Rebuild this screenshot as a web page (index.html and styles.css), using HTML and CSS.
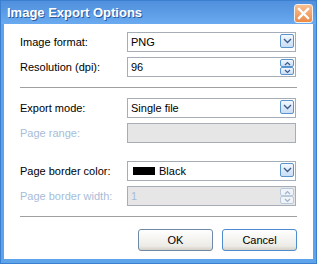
FILE: index.html
```html
<html>
  <head>
    <link rel="stylesheet" href="styles.css">
  </head>
  <body>
    <div class="window">
      <div class="titlebar">
        <span class="title">Image Export Options</span>
        <div class="close">
          <svg width="13" height="13" viewBox="0 0 13 13">
            <path d="M2 2 L11 11 M11 2 L2 11" stroke="#fff" stroke-width="2.4" stroke-linecap="square" fill="none"/>
          </svg>
        </div>
      </div>
      <div class="client">
        <div class="row first">
          <label>Image format:</label>
          <div class="field">
            <span>PNG</span>
            <div class="drop">
              <svg width="9" height="6" viewBox="0 0 9 6"><path d="M1 1 L4.5 4.5 L8 1" stroke="#3d5c8c" stroke-width="1.4" fill="none"/></svg>
            </div>
          </div>
        </div>
        <div class="row">
          <label>Resolution (dpi):</label>
          <div class="field">
            <span>96</span>
            <div class="spin">
              <div class="half"><svg width="7" height="5" viewBox="0 0 7 5"><path d="M1 4 L3.5 1.5 L6 4" stroke="#3d5c8c" stroke-width="1.2" fill="none"/></svg></div>
              <div class="half"><svg width="7" height="5" viewBox="0 0 7 5"><path d="M1 1 L3.5 3.5 L6 1" stroke="#3d5c8c" stroke-width="1.2" fill="none"/></svg></div>
            </div>
          </div>
        </div>
        <div class="sep"></div>
        <div class="row">
          <label>Export mode:</label>
          <div class="field">
            <span>Single file</span>
            <div class="drop">
              <svg width="9" height="6" viewBox="0 0 9 6"><path d="M1 1 L4.5 4.5 L8 1" stroke="#3d5c8c" stroke-width="1.4" fill="none"/></svg>
            </div>
          </div>
        </div>
        <div class="row">
          <label class="off">Page range:</label>
          <div class="field disabled"></div>
        </div>
        <div class="row gap">
          <label>Page border color:</label>
          <div class="field">
            <span class="swatch"></span>
            <span>Black</span>
            <div class="drop">
              <svg width="9" height="6" viewBox="0 0 9 6"><path d="M1 1 L4.5 4.5 L8 1" stroke="#3d5c8c" stroke-width="1.4" fill="none"/></svg>
            </div>
          </div>
        </div>
        <div class="row">
          <label class="off">Page border width:</label>
          <div class="field disabled">
            <span class="offtext">1</span>
            <div class="spin faded">
              <div class="half"><svg width="7" height="5" viewBox="0 0 7 5"><path d="M1 4 L3.5 1.5 L6 4" stroke="#9fb3cc" stroke-width="1.2" fill="none"/></svg></div>
              <div class="half"><svg width="7" height="5" viewBox="0 0 7 5"><path d="M1 1 L3.5 3.5 L6 1" stroke="#9fb3cc" stroke-width="1.2" fill="none"/></svg></div>
            </div>
          </div>
        </div>
        <div class="sep"></div>
        <div class="buttons">
          <button class="btn ok">OK</button>
          <button class="btn">Cancel</button>
        </div>
      </div>
    </div>
  </body>
</html>
```

FILE: styles.css
```css
body {
  margin: 0;
  font-family: "Liberation Sans", Arial, sans-serif;
  font-size: 11px;
}
.window {
  width: 317px;
  height: 264px;
  display: flex;
  flex-direction: column;
  background: #5ea4ea;
  box-sizing: border-box;
  border: 1px solid #3b7fd0;
}
.titlebar {
  height: 23px;
  display: flex;
  align-items: center;
  justify-content: space-between;
  padding: 0 3px 0 6px;
  background: linear-gradient(#4f8fdc, #6aaaf0);
}
.title {
  color: #fff;
  font-weight: bold;
  font-size: 13px;
  text-shadow: 1px 1px 0 #2d5b9c;
}
.close {
  width: 17px;
  height: 17px;
  border: 1px solid #f4f0ea;
  border-radius: 3px;
  background: linear-gradient(#f8bf92, #ec8a48);
  display: flex;
  align-items: center;
  justify-content: center;
  margin-top: 1px;
}
.client {
  flex: 1;
  margin: 0 3px 4px 3px;
  background: #fff;
  padding: 0 16px 0 16px;
}
.row {
  display: flex;
  align-items: center;
  margin-top: 5px;
}
.row.first {
  margin-top: 8px;
}
.row.gap {
  margin-top: 18px;
}
label {
  width: 107px;
  color: #000;
}
label.off {
  color: #a7bcd8;
}
.field {
  width: 169px;
  height: 20px;
  box-sizing: border-box;
  border: 1px solid #a6adb6;
  display: flex;
  align-items: center;
  padding-left: 3px;
  position: relative;
}
.field.disabled {
  background: #e6e6e6;
}
.offtext {
  color: #a7bcd8;
}
.swatch {
  width: 22px;
  height: 8px;
  background: #000;
  margin: 0 4px 0 2px;
}
.drop {
  position: absolute;
  right: 1px;
  top: 1px;
  width: 12px;
  height: 12px;
  border: 1px solid #5b93cc;
  border-radius: 2px;
  background: linear-gradient(#f3f8fe, #c8ddf4);
  display: flex;
  align-items: center;
  justify-content: center;
}
.spin {
  position: absolute;
  right: 1px;
  top: 1px;
  width: 14px;
  height: 16px;
  display: flex;
  flex-direction: column;
}
.half {
  flex: 1;
  border: 1px solid #5b93cc;
  border-radius: 2px;
  background: linear-gradient(#f3f8fe, #c8ddf4);
  display: flex;
  align-items: center;
  justify-content: center;
}
.spin.faded .half {
  border-color: #b8c9dc;
  background: #f0f3f7;
}
.sep {
  height: 1px;
  background: #a0a0a0;
  margin: 10px 0 10px 0;
}
.buttons {
  display: flex;
  justify-content: flex-end;
  gap: 9px;
  margin-top: 12px;
}
.btn {
  width: 75px;
  height: 22px;
  font-family: "Liberation Sans", Arial, sans-serif;
  font-size: 11px;
  border: 1px solid #6f8aa6;
  border-radius: 3px;
  background: linear-gradient(#ffffff, #ecebe6 80%, #d6d0c5);
  color: #000;
}
.btn + .btn {
  border-color: #4c8ccf;
}
```
